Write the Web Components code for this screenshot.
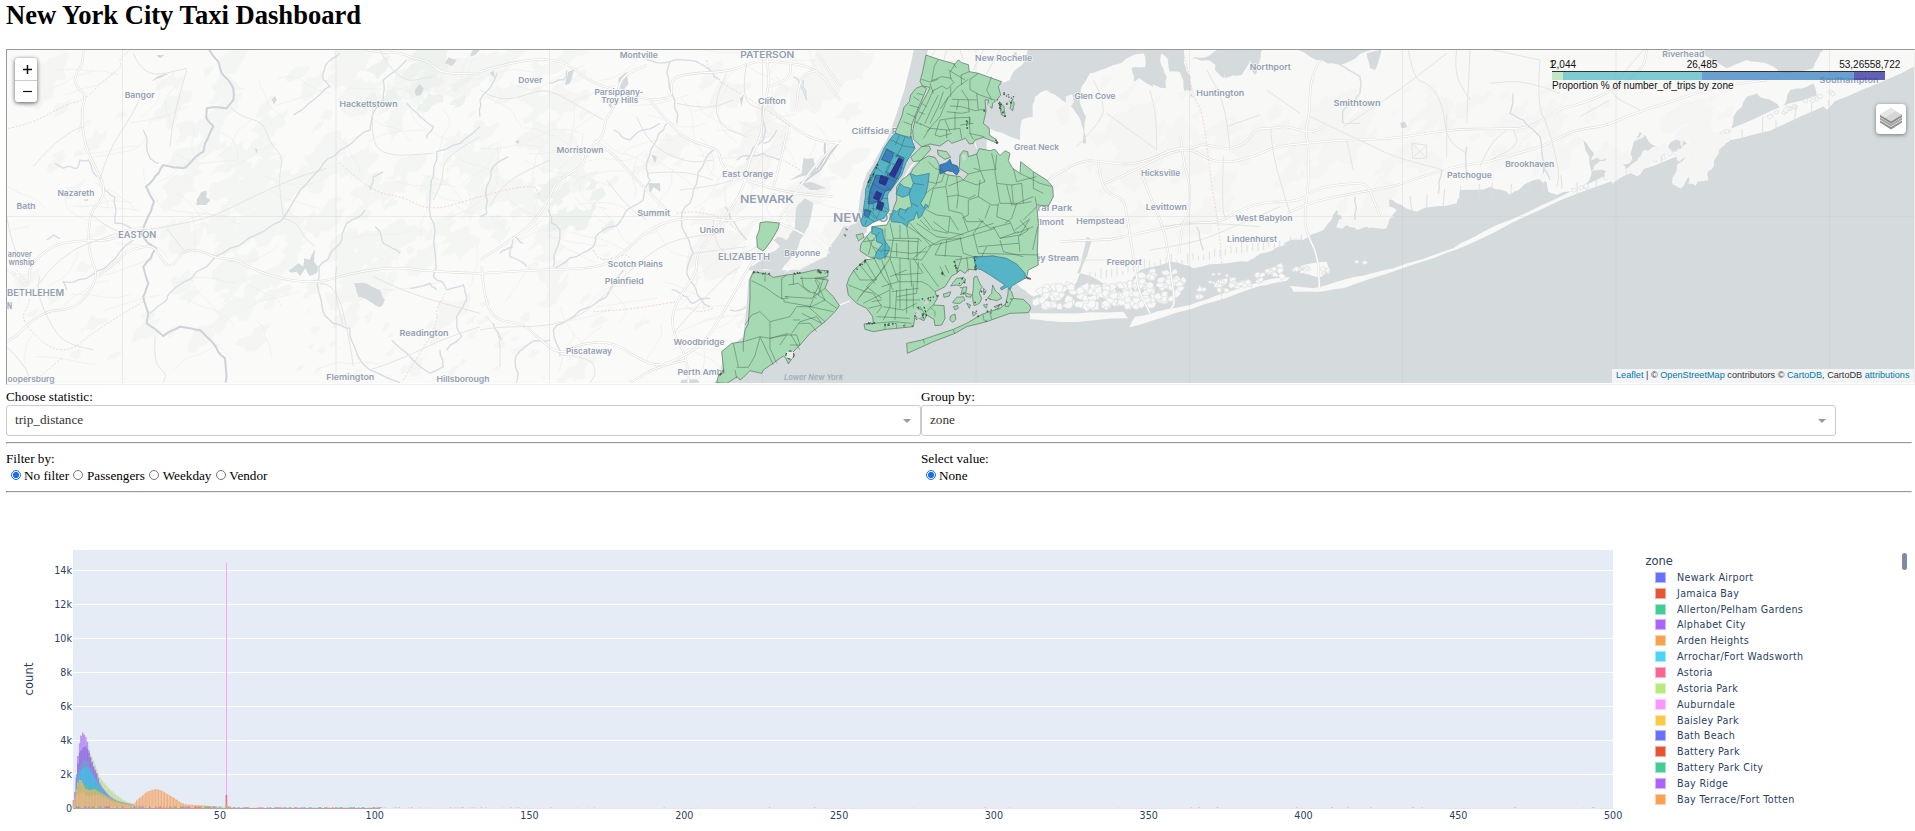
<!DOCTYPE html>
<html lang="en">
<head>
<meta charset="utf-8">
<title>New York City Taxi Dashboard</title>
<style>
body{margin:0;background:#fff;font:13.2px "Liberation Serif",serif;color:#000;overflow:hidden}
</style>
</head>
<body>
<taxi-dashboard>
  <span slot="title">New York City Taxi Dashboard</span>
  <taxi-map></taxi-map>
  <div slot="top">
    <labelled-select label="Choose statistic:">trip_distance</labelled-select>
    <labelled-select label="Group by:">zone</labelled-select>
  </div>
  <radio-set slot="filter" label="Filter by:" options="No filter|Passengers|Weekday|Vendor"></radio-set>
  <radio-set slot="value" label="Select value:" options="None"></radio-set>
  <trip-histogram slot="chart"></trip-histogram>
</taxi-dashboard>
<script>
const define = (name, html, after) => customElements.define(name, class extends HTMLElement {
  connectedCallback() {
    if (this.shadowRoot) return;
    const root = this.attachShadow({ mode: 'open' });
    const t = document.createElement('template');
    t.innerHTML = typeof html === 'function' ? html(this) : html;
    root.append(t.content.cloneNode(true));
    if (after) after(root, this);
  }
});
let seed = 7;
const rnd = () => (seed = (seed * 16807) % 2147483647) / 2147483647;
/* "x,y x,y ..." to a path, with midpoint displacement for natural shores */
function shape(str, amp = 0, closed = true) {
  let p = str.trim().split(/\s+/).map(s => s.split(',').map(Number));
  if (closed) p.push(p[0]);
  for (let k = 0; amp && k < 2; k++) {
    const q = [p[0]];
    for (let i = 1; i < p.length; i++) {
      const [a, b] = p[i - 1], [c, d] = p[i], l = Math.hypot(c - a, d - b), m = Math.min(l, 60);
      if (l > 9) q.push([(a + c) / 2 + (rnd() - .5) * amp * m, (b + d) / 2 + (rnd() - .5) * amp * m]);
      q.push(p[i]);
    }
    p = q;
  }
  return 'M' + p.map(v => v.map(n => n.toFixed(1)).join(' ')).join('L') + (closed ? 'Z' : '');
}
function smooth(str) {
  const p = str.trim().split(/\s+/).map(s => s.split(',').map(Number));
  let d = 'M' + p[0];
  for (let i = 1; i < p.length - 1; i++) d += `Q${p[i]} ${(p[i][0] + p[i + 1][0]) / 2},${(p[i][1] + p[i + 1][1]) / 2}`;
  return d + 'L' + p[p.length - 1];
}
const polys = (cls, list, amp) => list.map(s => `<path class="${cls}" d="${shape(s, amp)}"/>`).join('');
const lines = (cls, list, amp = 0) => list.map(s => `<path class="${cls}" d="${amp ? shape(s, amp, false) : smooth(s)}"/>`).join('');
const roads = list => lines('rc', list) + lines('ri', list);
const A = s => `<g transform="scale(.33333)">${s}</g>`;
const at = (x, y, s) => `<g transform="translate(${x} ${y}) scale(.33333)">${s}</g>`;

/* woodland and built-up patches */
function blots(n, x0, y0, w, h, cls, r) {
  let o = '';
  for (let i = 0; i < n; i++) {
    const cx = x0 + rnd() * w, cy = y0 + rnd() * h, rr = r * (.3 + rnd()), k = 11, pts = [];
    for (let j = 0; j < k; j++) { const a = j / k * 6.283, q = rr * (.35 + rnd()); pts.push((cx + Math.cos(a) * q * 1.4).toFixed(1) + ',' + (cy + Math.sin(a) * q - Math.cos(a) * q * .7).toFixed(1)); }
    o += `<path class="${cls}" d="${shape(pts.join(' '), .5)}"/>`;
  }
  return o;
}
function minor(n, x0, y0, w, h) {
  let o = '';
  for (let i = 0; i < n; i++) {
    let x = x0 + rnd() * w, y = y0 + rnd() * h, a = rnd() * 6.28, s = x.toFixed(1) + ',' + y.toFixed(1);
    for (let j = 0; j < 7; j++) { a += (rnd() - .5) * .9; x += Math.cos(a) * 9; y += Math.sin(a) * 6; s += ' ' + x.toFixed(1) + ',' + y.toFixed(1); }
    o += `<path class="mn" d="${smooth(s)}"/>`;
  }
  return o;
}
function specks(n, x0, y0, x1, y1, spread) {
  let o = '';
  for (let i = 0; i < n; i++) { const t = rnd(); o += `<circle cx="${(x0 + (x1 - x0) * t + (rnd() - .5) * spread).toFixed(1)}" cy="${(y0 + (y1 - y0) * t + (rnd() - .5) * spread).toFixed(1)}" r="${(1.3 + rnd() * 1.8).toFixed(1)}"/>`; }
  return o;
}

const places = [
  ['Bangor',139.7,98,30],['Hackettstown',368.5,107,58],['Nazareth',76,196.3,37],['Bath',26,209,19],['EASTON',137.3,238,38,8.4],
  ['anover',19.8,256.7,24],['wnship',21.5,265,26],['BETHLEHEM',35.5,296,57,8.4],['N',9.5,309,5,8.4],['oopersburg',31,381.5,47],
  ['Flemington',350.3,380,48],['Hillsborough',463,382,53],['Readington',424,335.5,49],['Montville',638.7,58.3,38],['Dover',530.3,82.5,24],
  ['Parsippany-',619,94.8,49],['Troy Hills',619.7,103,37],['PATERSON',767.3,57.8,54,8.6],['Clifton',772,104,28],['Morristown',580,152.5,47],
  ['East Orange',747.7,177,51],['NEWARK',767,202.7,54,11],['Summit',653.7,216,33],['Union',712,232.5,25],['ELIZABETH',744,259.5,52,8.4],
  ['Bayonne',802.3,255.8,36],['Scotch Plains',635.3,266.7,55],['Plainfield',624.3,284,39],['Woodbridge',699,344.7,51],['Piscataway',589,353.7,46],
  ['Perth Amboy',705,374.5,55],['New Rochelle',1003.6,61,57],['Cliffside Park',882,133.5,61],['Great Neck',1036.5,150,45],
  ['NEW YORK',870,222,74,12],['Floral Park',1048,210.5,49],['Elmont',1049,224.5,30],['Valley Stream',1049,260.5,60],
  ['Glen Cove',1095,99,41],['Northport',1270.3,70,41],['Huntington',1220.3,96,48],['Smithtown',1357,105.7,47],['Hicksville',1160.6,175.7,39],
  ['Levittown',1166.3,209.5,41],['Hempstead',1100.3,223.5,48],['West Babylon',1264,221,57],['Lindenhurst',1252,241.5,50],['Freeport',1124.3,265,35],
  ['Patchogue',1469.5,178,45],['Riverhead',1683.3,57.3,42],['Brookhaven',1529.7,167,49],['Southampton',1849,83,59]];
const labels = places.map(([t, x, y, w, s = 8]) => `<text x="${x - w / 2}" y="${y}" font-size="${s}" textLength="${w}" lengthAdjust="spacingAndGlyphs">${t}</text>`).join('')
  + `<text x="784" y="380" font-size="7.4" font-style="italic" textLength="59" lengthAdjust="spacingAndGlyphs" style="fill:#a2adb9;stroke:none">Lower New York</text>`;

function mapSvg() {
  const woods = blots(70, 170, 55, 310, 190, 'wd', 13) + blots(26, 230, 235, 220, 60, 'wd', 12) + blots(50, 450, 55, 130, 200, 'wd', 11) + blots(16, 130, 280, 150, 60, 'wd', 9)
    + blots(14, 8, 60, 120, 320, 'wd', 7) + blots(40, 300, 300, 250, 80, 'wd', 4) + blots(26, 580, 55, 240, 300, 'wd', 6) + blots(22, 200, 150, 90, 80, 'wd', 12)
    + blots(16, 360, 55, 110, 70, 'wd2', 9) + blots(10, 545, 180, 70, 60, 'wd2', 10);
  const nj = A(
    lines('rv2', ['628,150 655,185 665,220 700,265 700,300 680,325 620,325 618,350 640,380 615,430 610,455 570,490 550,505 490,495 475,520 438,560 462,605 440,660 425,700 445,730 468,745 430,800 445,850 430,890 445,940 440,970 490,1008 540,980 600,990 640,1030 675,1075 677,1148'], .12)
    + lines('rv', ['1220,180 1150,240 1150,300 1125,330 1110,390 1040,440 970,490 900,570 850,655 790,695 690,745 620,800 530,860 500,900 450,940','430,390 440,440 450,475 475,490','165,490 190,505 230,505 240,480 265,480 290,530','1440,380 1380,430 1310,455 1300,530 1290,600 1305,690 1300,830 1340,870 1390,855 1400,900 1370,950 1385,1010 1340,1050','1095,630 1040,670 1020,730 965,790 955,840 965,910 1000,970 1050,985 1070,1060 1110,1110 1200,1148','1220,310 1260,350 1300,380 1280,415','310,565 345,590 345,670 400,690','880,345 940,300 990,260 970,240 975,200 1020,160','200,870 190,845 260,835 330,790 400,720','1110,570 1120,530 1150,515','1125,680 1150,730 1200,760','1175,1020 1230,1070 1290,1120 1330,1100 1320,1050','1230,865 1290,850 1310,870','140,720 160,705 180,715'], .25)
    + polys('wt', ['590,600 605,575 620,572 618,590 632,600 620,615 590,615','865,812 895,790 910,800 912,775 928,780 945,748 942,785 955,800 950,820 930,828 915,805 900,828 890,815 875,818','1062,850 1090,848 1140,870 1155,900 1140,922 1110,905 1075,890','1245,270 1258,252 1272,265 1262,285 1248,288','1335,190 1345,172 1370,180 1355,198','815,300 826,288 830,300 822,314','455,243 475,228 508,220 480,235','765,445 773,450 770,460','240,598 265,596 262,604','470,165 495,165 480,175','1410,170 1420,150 1440,150 1425,165'], .15)
    + lines('bd', ['25,385 95,372 200,312 255,300 310,240 368,200 355,180 390,150','1010,480 1110,575 1210,590 1290,635 1440,590','430,905 300,980 185,1075 60,965 85,915 88,895','185,1075 120,1130','1335,880 1305,930 1315,960 1280,1030 1240,1090 1210,1140','50,810 85,855'])
    + roads(['250,150 250,190 225,225 225,255 260,290 245,320 250,420 280,490 315,560 305,600 268,640 265,760 295,825 260,890 210,930 150,930 90,965 60,1000 20,1025','20,810 50,820 60,850 90,860 85,800 150,740 220,722 340,722 370,690 430,685','295,825 350,790 375,755 430,740 465,740 490,790 520,800 550,750 600,750 650,775 710,778 740,800 850,840 960,848 1050,820 1180,800 1300,815 1440,820','1100,150 1160,160 1190,155 1240,175 1290,185 1320,220 1440,222'])
    + lines('mr', ['400,160 430,235 560,205','690,320 720,350 790,365 810,430 850,470 835,540 850,650','850,655 890,665 910,710 945,740','960,850 1010,850 1050,1030 1060,1100','1120,830 1220,880 1440,940','1110,1110 1200,1080 1320,1020 1440,980','1010,800 1000,860 1030,980','500,685 550,750','700,620 850,545 980,505','430,690 600,665 700,620','20,650 40,760 90,800','20,1040 80,1100 90,1148','110,860 180,760 350,700','465,1010 460,1090 500,1120 490,1148','1440,410 1330,470 1330,540 1300,600','560,210 520,350 510,440','120,830 105,870 160,990 200,1030 280,1050','268,640 320,680 370,700','100,500 150,440 220,390 250,380','300,540 320,460 400,340 430,270','1120,320 1110,420 1160,470 1300,460','1140,150 1190,250 1300,230'])
  );
  const B = at(480, 40,
    lines('rv', ['85,350 40,380 20,440 20,520 0,530','205,510 240,570 225,640 220,680','700,330 660,390 640,450 615,500 610,570 640,640 620,700 650,760 690,800','560,250 530,300 500,370 510,420 490,480 430,530 370,570 340,620 290,650 225,685','400,270 450,300 490,270 540,250','570,65 575,160 590,250','860,180 850,300 800,360','890,270 850,310','750,810 800,800','575,750 620,770 640,790 690,775','430,690 380,770 280,830 220,870 240,950','500,60 570,65 650,65 690,90 720,120','130,610 100,590 90,650 140,680','210,900 150,910 105,960 110,1028','0,230 0,180 50,100','210,130 250,120 260,90','940,110 980,180 970,120','770,360 850,340 900,360','735,500 770,560 800,600','65,900 40,850','60,640 100,620'], .3)
    + polys('wt', ['415,115 440,95 445,130 430,155 415,140','515,345 530,350 525,370','505,430 540,430 540,455 520,440 510,460','265,95 285,85 270,130 255,135','385,195 395,185 395,205','605,1020 650,1018 660,1028 600,1028','30,100 40,92 45,115','780,175 790,165 785,200','105,305 118,300 116,312'], .1)
    + polys('wt', ['970,355 1000,355 1010,400 960,410 930,420 965,400','965,430 990,425 1040,445 990,450','950,500 975,475 1000,490 985,560 950,630 905,690 800,690 830,670 870,640 900,620 880,600 895,590 920,600 945,560'], .12)
    + lines('rv2', ['1080,300 1020,390 960,430','1010,390 1035,350 1035,310'], .1)
    + lines('bd', ['0,470 160,425 180,470','340,815 440,810 590,785','620,800 650,820 700,805','720,125 780,160 860,210 930,260','340,630 355,670 440,640 450,655','590,520 650,510 740,540 790,590','970,395 910,360','680,60 690,100'])
    + roads(['0,95 120,58 250,58 320,120 400,150 500,180 580,175 570,120 620,100 750,95 830,60 935,70 1010,85 1080,180','0,660 80,610 170,540 210,470 230,420 310,380 320,330 370,290 375,240 410,190 420,110 500,75','0,700 200,688 350,685 420,650 500,570 590,535 700,535 760,545 800,530 900,545 1000,600 1040,590','510,180 590,280 650,310 720,330 720,370 760,410 860,440 940,460 1060,470','340,300 400,340 450,400 500,450 560,510','5,680 10,760 40,840 130,850 180,900 240,945 300,910 400,905 480,960 540,980 620,945 680,900 740,800 800,690 860,600 900,530 960,440 1000,380 1080,300','860,40 870,130 850,200 845,290 810,350 790,450 730,540 700,580 650,640 650,700 610,750 575,820 580,880 620,950 625,1028','930,70 940,110 870,140','1080,140 1040,80 1010,40','850,190 920,250 1000,300 1080,310','920,280 900,370 880,440','620,960 540,975 450,1028','950,200 955,110 1010,90'])
    + lines('mr', ['0,150 60,190 180,150 220,155 300,200 370,240','30,500 60,430 210,360','470,230 500,310 620,370 700,360','740,100 700,180 720,260 800,290','590,190 680,210 760,180','0,870 50,860 200,860 300,830 380,760 440,700 560,600 720,580','240,945 330,950 350,1000 330,1028','380,420 440,500 500,540','580,880 720,720 780,680','640,640 800,620','600,450 690,440 760,420','700,540 700,610 760,660 830,620','500,400 600,390 700,420','800,70 780,180 850,210','20,830 60,870 60,980'])
  );
  const east = at(700, 40,
    `<path class="wt" d="${shape('643,20 1090,20 1090,1200 20,1200 40,1030 60,1010 75,930 130,890 145,720 160,690 230,690 300,690 380,650 388,620 430,560 470,550 482,460 500,400 560,300 600,190', .07)}"/>`
    + polys('ld', ['340,560 385,600 380,645 300,680 255,698 290,640 300,600'], .1)
    + `<path class="pier" d="M340 600l50 40M355 590l40 30M375 575l25 15M400 570l20 10M455 545l-15 20"/>`
    + polys('ld', ['686,20 985,20 970,70 940,95 930,120 900,130 810,100 680,60'], .15)
    + polys('ld', ['500,560 520,545 570,545 570,700 500,680'])
    + lines('mr', ['705,30 690,60','740,30 730,65','780,30 790,60','850,30 820,90','900,28 860,100','700,75 780,60'])
    + polys('wt', ['940,40 950,35 948,60','990,800 1080,800 1080,815 990,825'], .1)
    + lines('ri', ['420,795 450,783','490,590 515,565 520,550 570,540','590,470 600,440 625,390 650,360 680,335','640,310 645,275','470,600 500,580','822,300 830,325','890,300 893,345'])
  ) + at(1060, 40,
    `<rect class="wt" x="0" y="20" width="2600" height="1020"/>`
    + polys('ld', ['-220,600 -220,260 -120,300 -115,240 -82,232 -75,170 -40,150 0,175 30,195 65,255 68,310 78,310 78,230 60,190 62,150 90,100 160,75 210,50 250,40 255,85 215,85 222,125 260,98 262,130 318,145 320,110 300,60 305,40 325,60 330,95 360,97 372,150 400,175 392,110 372,70 368,20 480,20 440,50 395,55 450,62 490,90 494,115 545,105 572,60 585,105 600,60 610,20 690,20 770,60 840,75 900,40 960,20 1910,20 1950,55 2000,85 2060,60 2130,75 2155,95 2260,85 2280,40 2300,20 2600,20 2600,60 2440,130 2340,170 2300,210 2270,170 2260,130 2190,150 2180,180 2160,205 2110,175 2090,160 2060,170 2020,230 2000,290 1960,280 1900,325 1860,290 1815,330 1770,310 1740,275 1710,345 1620,360 1570,300 1595,400 1570,440 1490,465 1465,455 1455,420 1410,425 1350,465 1290,440 1200,450 1190,490 1070,515 1010,490 970,470 970,495 1010,510 980,565 930,560 880,545 850,545 830,510 790,570 730,600 690,600 640,630 560,665 500,670 400,685 330,665 240,690 210,740 150,745 60,700 40,740 0,740 -80,770 -130,730 -140,690 -60,640'], .2)
    + polys('ld', ['-90,820 0,820 190,815 205,835 0,846 -90,838','208,862 225,830 310,810 390,795 490,760 620,720 690,712 680,722 600,738 480,780 310,832','690,738 760,745 880,712 1000,685 1180,625 1270,575 1440,498 1620,415 1780,355 1980,280 2190,190 2340,150 2500,85 2600,40 2600,62 2500,110 2320,185 2130,272 1960,312 1720,396 1440,510 1260,598 1120,655 850,745 780,755 700,755','730,675 800,665 810,690 780,712 730,700'], .08)
    + polys('wt', ['218,82 262,80 280,140 235,112','470,62 497,90 490,115 465,90','920,40 965,28 945,90 930,85','690,20 960,20 900,42 840,66 770,50','1020,250 1035,245 1042,262 1025,265','80,590 95,600 60,700 52,700'], .1)
    + (() => { let o = ''; const pt = (x, y, s) => { const q = []; for (let j = 0; j < 7; j++) q.push((x + Math.cos(j * .9) * s * (.5 + rnd())).toFixed(1) + ',' + (y + Math.sin(j * .9) * s * (.5 + rnd() * .8)).toFixed(1)); o += `<path class="ld is" d="${shape(q.join(' '), .2)}"/>`; };
      for (let i = 0; i < 100; i++) pt(-75 + rnd() * 360, 735 + rnd() * 66, 13);
      for (let i = 0; i < 50; i++) pt(225 + rnd() * 150, 692 + rnd() * 92, 11);
      for (let i = 0; i < 42; i++) { const t = rnd(); pt(410 + t * 260, 762 - t * 70 + (rnd() - .5) * 34, 9); }
      for (let i = 0; i < 12; i++) pt(700 + rnd() * 110, 680 + rnd() * 20, 7);
      for (let i = 0; i < 7; i++) pt(450 + rnd() * 120, 700 + rnd() * 30, 5);
      pt(890, 665, 5); pt(915, 668, 8);
      for (let i = 0; i < 34; i++) { const t = rnd(); pt(1440 + t * 900, 497 - t * 345 - rnd() * 9, 7); } return o; })()
    + (() => { let o = ''; for (let i = 0; i < 40; i++) { const t = i / 40, x = 90 + t * 650, y = 722 - t * 110 - rnd() * 12; o += `<path class="crk" d="M${x.toFixed(0)} ${y.toFixed(0)}v-${(10 + rnd() * 22).toFixed(0)}"/>`; } for (let i = 0; i < 26; i++) { const x = 1040 + i * 50 + rnd() * 20, y = i < 10 ? 510 - i * 7 : 470 - (i - 10) * 17; o += `<path class="crk" d="M${x.toFixed(0)} ${y.toFixed(0)}l${(rnd() * 10 - 5).toFixed(0)} -${(26 + rnd() * 30).toFixed(0)}"/>`; } return o; })()
    + blots(70, 0, 190, 2000, 210, 'bu', 40) + blots(30, 0, 250, 1000, 290, 'bu', 46) + blots(40, 100, 120, 1900, 200, 'wd', 15)
    + roads(['-190,520 -60,440 0,395 70,360 130,365 200,375 270,360 340,325 400,325 430,310 500,330 560,310 585,265 640,265 680,258 730,275 770,275 800,250','135,430 230,390 300,350 360,330 400,330 450,362 510,368 580,350 650,318 740,310 850,300 980,298 1100,280 1200,267 1290,267 1400,265 1450,240 1500,205 1570,190 1640,160 1750,90 1760,30','0,605 80,600 150,600 210,585 310,565 390,548 480,547 520,520 600,487 700,485 740,470 780,440 900,428 925,440 945,490 960,530','680,520 740,490 860,463 1000,440 1070,415 1180,380 1290,365 1390,335 1460,315 1540,270 1640,258 1720,220 1850,180 1960,140 2120,120','115,370 120,410 140,460 190,475 200,520 210,590 225,680 235,750 270,820','240,390 270,470 310,560 325,640 335,720 345,790 330,810','362,290 370,370 390,430 390,510 365,560 358,640','780,60 750,110 750,220 735,270 745,310 745,450 735,500 735,570 775,650 778,745'])
    + lines('mr', ['50,320 130,240 130,180 100,120','140,220 250,300 290,330','290,330 290,230 270,150','510,330 500,200 440,90','632,265 635,340 690,520','1045,28 1060,120 1110,130 1150,200 1160,300 1220,340','850,260 980,180 1160,40','750,230 920,310 1000,350 1150,390','850,250 900,250','490,350 485,510 500,540','860,300 880,390','1190,28 1180,100 1230,180','1230,28 1220,250','1160,220 1160,350','1440,60 1430,190 1465,260 1500,400 1490,440','1290,360 1380,320 1360,270','1750,30 1690,100 1640,160 1740,210','1260,380 1290,310 1340,270','270,630 400,610 500,570 660,500','0,660 200,660','300,560 400,545 600,560','1500,160 1400,120 1290,130','1650,180 1560,230','620,150 720,220','500,260 600,225','1440,60 1300,30'])
    + lines('rv', ['840,75 900,110 900,160 880,185 850,210 850,250','885,470 885,540','1145,390 1135,460','1220,320 1220,420','1360,160 1350,220 1390,240 1440,290 1450,400','410,560 430,630','1450,380 1470,420'], .15)
    + lines('bd', ['365,28 380,70 400,170 425,210 440,310 455,440 470,520 485,640 485,780'])
    + `<path class="mr" d="M1055 310l45 5 0 40-42 0zM1058 312l40 40M1100 316l-40 35M1470 202l0 0"/>`
  );
  const zones = at(700, 40,
    polys('g', ['678,45 715,58 765,72 775,60 785,68 805,74 808,95 835,100 905,125 895,140 902,165 890,180 878,190 876,205 862,195 866,180 855,180 858,215 850,250 868,265 868,285 888,298 892,310 850,292 825,300 820,310 808,312 797,295 755,310 745,300 720,318 690,312 665,320 640,298 638,272 648,228 665,190 682,160 690,142 668,138 660,125 668,95','648,145 665,138 680,145 672,165 650,215 635,255 632,292 600,285 585,278 605,230 612,202 628,185 632,165','665,320 688,318 692,328 662,362 640,365 632,352 650,335','712,330 740,335 752,352 735,358 715,345','180,548 200,545 238,549 235,565 215,600 195,628 188,632 172,622 170,590 178,570',
      '160,695 185,700 205,703 220,712 260,705 300,700 345,690 385,692 383,710 345,715 385,720 375,745 400,770 418,797 405,815 375,845 330,880 300,915 275,940 280,950 265,972 258,955 250,948 190,990 185,1000 150,992 130,1012 120,1020 112,1010 80,1030 50,1028 56,1005 72,998 65,935 95,910 130,905 135,870 145,850 150,780 150,720',
      '622,940 620,910 665,900 700,888 760,868 800,850 848,822 900,805 925,785 935,775 970,778 990,797 992,806 985,818 930,820 860,845 800,860 765,880 700,905',
      '632,400 640,385 655,370 660,362 685,348 705,352 717,372 718,395 745,405 780,410 790,420 805,402 778,385 780,345 790,332 803,335 805,350 830,342 838,326 870,332 885,328 900,347 915,332 930,340 925,362 938,385 960,400 962,365 1000,395 1040,420 1058,440 1060,470 1045,498 1010,495 1015,550 1012,640 1015,675 985,690 980,712 965,690 930,665 880,648 822,650 830,690 805,688 795,700 780,690 770,700 755,708 735,740 705,755 712,775 700,795 732,797 735,835 725,855 705,857 702,838 680,825 672,842 645,830 640,860 560,868 520,875 495,868 492,852 520,850 518,830 500,805 470,790 445,765 440,735 448,712 462,690 495,660 525,655 505,650 480,632 483,612 500,590 515,572 515,560 560,555 568,540 575,520 590,480 590,440 605,420'])
    + polys('g', ['468,585 488,580 492,592 475,603','432,583 438,585 436,590','437,566 443,568 440,571','770,715 790,712 798,720 780,738 768,735 752,738','822,712 830,708 842,735 847,740 838,760 845,775 838,790 822,797 818,770 820,745','752,828 765,822 768,838 757,847 750,840','788,742 800,740 798,755 782,765','770,772 790,770 795,780 780,790 758,788','862,775 875,760 878,735 885,750 900,765 905,775 890,782','795,758 815,765 812,772 798,770','925,745 935,755 940,775 925,800 915,798 922,770','760,800 772,796 775,805 765,810','850,795 862,792 858,805','882,800 898,795 895,808','800,790 812,795 808,805','730,762 752,755 748,768 732,772','935,180 943,190 938,212 930,205','898,185 912,200 915,230 905,225','850,745 858,752 852,765','817,815 830,820 820,828'], .1)
    + polys('c', ['585,280 610,288 630,295 633,288 636,300 645,325 635,340 618,368 605,405 580,440 565,460 562,470 567,512 552,535 535,540 518,548 500,560 488,558 482,545 488,530 490,510 496,470 497,448 512,405 535,365 552,325 570,298','630,400 650,408 688,400 683,440 676,465 662,490 672,505 676,492 685,498 672,512 665,528 655,535 650,515 642,538 625,545 622,560 605,548 575,545 572,535 582,510 590,515 600,505 615,510 635,500 630,475 628,460 640,430','600,430 612,440 632,445 626,465 608,472 588,462','518,560 548,568 550,590 553,600 570,625 558,650 540,658 524,652 530,635 548,612 530,605 528,585 515,580','822,650 860,650 880,648 920,655 950,672 975,700 975,715 935,738 930,750 922,740 905,750 900,745 915,735 870,705 845,690 828,685'])
    + polys('m', ['560,328 580,338 575,365 568,368 545,358','590,345 612,355 600,400 575,445 555,455 545,480 520,490 505,492 510,450 520,425 528,405 560,410','495,508 513,513 505,532 492,526','720,375 740,368 750,358 755,372 772,378 778,392 770,405 758,395 742,392 720,402'])
    + polys('c', ['582,345 597,352 572,400 555,398'])
    + polys('d', ['597,354 608,360 583,413 568,405','543,406 565,415 556,436 537,428','530,454 545,461 536,482 520,474','535,482 552,490 545,512 529,505'])
    + `<path class="z" d="M715 58l-12 20-8 45M765 72l-15 25 2 20 10 10-20 20M808 95l-25 10 2 30M835 100l-25 18 0 30 25 15 50 18M695 122l30-12 30 5M665 118l25 8 25-8M805 118l-35 25-30 35-20 30M742 148l-15-10-30 15M755 178l75 2M750 198l35 2 40 12 33-5M740 215l45 5 25-5M720 240l40-6 50-2 0 20M700 150l-20 45-30 55M715 165l-20 40-20 45M730 155l-15 45-25 50M745 170l-25 60-40 45M665 190l15 10M656 215l18 8M645 245l20 10M660 250l30 15 50 5 40-5M690 265l-20 30M720 240l-15 45 15 5 35-10M740 270l0 25M780 265l5 30M808 230l2 50 10 18M760 72l10 12M808 280l45 10M820 250l-40 5M752 140l0 30M775 180l-5 30M805 180l2 35M640 170l18 12M628 195l28 8M620 220l28 12M610 245l25 10M650 160l20 5M875 110l-15 40 15 30M690 130l10 30M785 150l20 30M830 160l5 50M745 90l50 30M735 240l15 35M765 215l0 55"/>`
    + `<path class="z" d="M570 298l40 20 35 5M598 285l-12 30M615 290l-10 30M555 325l30 15 30 15M605 320l-18 35M543 358l30 12-25 50-40-15M525 380l25 20M575 370l20 10 15 5M535 365l-30 80M560 395l25 20 10 0M528 405l-25 75M515 430l35 20 25 0M505 455l40 20 20 0M500 485l30 0 35 25M510 470l-5 45 20 20M490 510l25 5 20 25M515 505l45 10M550 490l-20 45M488 530l20 5 15 10M500 540l-5 15M562 410l20 15M560 440l10 12M520 490l0 25"/>`
    + `<path class="z" d="M685 365l20 20 30 10-10 30-20 5-20-5M718 395l-10 40-30 25M745 405l-8 35 5 30 5 40M790 420l-45 18M735 440l-35 5-15 60M742 470l30-5 35 10 20-10M770 410l5 55-5 40M790 420l40 15 25-10-15-35-20-5M805 402l40-10 45-5M830 342l10 45M885 385l-10-45M890 345l-5 50 5 35 45 5 30-5M840 420l-5 50 40 25 20 0M890 430l10 60M935 435l5 55M940 385l10 40 60-15M965 430l5 60M1000 395l0 50 30 15M960 400l60 30 35 10M950 490l50-20M1005 470l5 25M835 470l-30 10 0 45-20 10M870 495l-15 40M895 490l-5 40 40 15M920 435l15 60 60-10M900 490l50 0-15 45-20 15M745 510l40 10 15 25 50 0M680 510l30 15 40 5 25 40M670 530l30 40 45 10M660 540l30 30M650 550l60 40 40 5 70-25 60-20M625 560l80 55 80-20 100-30M625 545l65 70M685 620l40-20 60-5M700 545l40 30 50 10M750 530l-5 45M790 535l15 40M835 535l35 30 60-15M850 540l-30 40M880 560l20 35 55-20M930 545l15 35M900 595l60-10 30-50M960 540l25 30-30 20 5 45M985 540l-40 30M1010 500l-40 40M950 580l50-20M1013 560l-15 70M900 600l10 35 60 15M820 580l15 60M835 620l120-10M835 640l180 5M860 620l-15 30M780 590l10 50 45 15M740 600l-5 50M725 605l-20 40 80 5M830 650l-65 10M785 650l-15 50M800 650l5 45"/>`
    + `<path class="z" d="M555 565l0 95M570 550l10 45 75 0 10 10M600 555l0 40M620 560l5 35M580 595l-10 60M625 600l0 60M655 595l-5 65M560 600l95 5M545 630l85 10 50-5M555 650l110 10 30-45M590 610l0 40M525 600l-35 5M540 575l-25 30-10 40M500 590l30 50M520 620l25 15M495 660l35 60M480 675l45 55M460 690l20 30 50 0M520 650l30 60 30 40M545 660l30 80M500 740l40-40 30-45M480 770l45-50 30-45M445 735l50 20 25 5M470 785l20-30 15-15M500 740l45 35M490 790l40-20 40-20M520 760l25 40-15 20M545 740l50-15 70 0M570 655l25 70M600 655l0 150M630 660l5 80M655 665l-5 95M665 700l-80 5M665 670l50 70M620 690l-50 20M590 780l70 0M570 740l0 60-20 40M590 750l-5 90M620 745l0 75M640 730l0 75M550 800l60 10 40-20M530 830l100 5M520 850l60-5 55 5M555 850l0 18M590 850l0 15M615 850l0 12M650 760l-60 10M655 745l-80 10M665 725l20 10 20 20M690 800l15 15 0 15M700 795l-25 25M650 800l20 30M660 800l20 30M650 815l15 20M720 680l15 30M735 675l12 25M765 665l5 30M545 780l-30 5M505 805l40-10M680 620l-40 35 30 45"/>`
    + `<path class="z" d="M155 722l40 20 35 25 25 15M195 703l0 22M260 705l-15 10 0 40 0 20 20 0M280 705l0 30M265 735l30-5 30 25 20 5M305 710l5 30 20 15M300 715l80 0M345 715l15 15-20 40 10 5M370 715l-15 50M375 745l-40 30-80-5 10 0M340 755l70 50M345 720l30 60M375 780l-40 20-85-15M340 775l-10 25 70 15M330 800l-40 0-20 30-60 15-30-30-25 10-20 30M210 845l0 50 50-10-20 30M130 905l50-15 30 5 55-15M180 892l-15 55-20 35-35 0M100 910l15 70M180 890l40 85M210 895l0 30 20 45M270 880l30 50M260 885l30 0 10 30-30 0M295 850l35 0 20 25M275 880l25-35 50-15 15 20M305 820l60 30M375 845l-50-45M105 990l5 25M300 840l-20 0M130 905l0 30"/>`
    + `<path class="z" d="M640 430l32 5M655 500l-20-10M600 505l-5 20 20 15M625 500l-10 20M760 870l5 12M670 898l3 12M848 822l5 22M870 816l5 22"/>`
    + `<g class="sp">${specks(9,160,695,215,705,6)}${specks(8,280,702,300,698,5)}${specks(9,345,692,386,700,8)}${specks(12,893,175,912,230,10)}${specks(9,650,800,668,835,16)}${specks(14,665,785,710,770,16)}${specks(8,822,655,828,690,6)}${specks(7,765,660,772,695,6)}${specks(16,500,850,640,856,6)}${specks(10,465,690,510,650,6)}${specks(10,500,440,545,355,5)}${specks(4,855,210,850,216,4)}${specks(5,888,300,892,310,4)}${specks(8,975,712,990,717,6)}${specks(12,860,820,930,780,10)}${specks(5,720,690,728,705,5)}${specks(5,60,1005,70,990,4)}${specks(14,905,150,940,190,30)}${specks(6,800,240,808,300,4)}${specks(14,790,720,860,820,60)}</g>`
    + `<circle cx="270" cy="945" r="12" fill="#e8ecea" stroke="#222" stroke-width="3" stroke-dasharray="9 8"/><path d="M650 815q-12 20 3 24M672 800l8 28" fill="none" stroke="#333" stroke-width="3" stroke-dasharray="6 5"/>`
    + `<path style="fill:#d5dadd" d="M645 815q10-15 18 2q4 20-10 18zM668 782l18-4 0 10-14 8zM785 345l12-3 0 18-8 2zM862 190l8 2 0 14-8-2z" opacity=".8"/>`
  );
  return `<svg viewBox="7 50 1907 333" width="1907" height="333">
  <clipPath id="frame"><rect x="7" y="50" width="1907" height="333"/></clipPath>
  <g clip-path="url(#frame)"><rect x="0" y="40" width="1915" height="350" fill="#fafaf8"/>
  ${blots(40, 10, 60, 850, 320, 'bu', 14)}${blots(30, 700, 50, 160, 260, 'bu', 18)}${woods}${minor(90, 10, 55, 560, 320)}${minor(90, 570, 55, 260, 310)}
  ${nj}${B}${east}
  <path d="M122.5 50V383M336 50V383M549.5 50V383M762.5 50V383M976 50V383M1189.5 50V383M1402.5 50V383M1616 50V383M1829.5 50V383M7 216.5H1914" stroke="#c9c6c4" stroke-opacity=".28" fill="none"/></g>
  <g class="lb">${labels}</g><g clip-path="url(#frame)">${zones}</g></svg>`;
}

define('zoom-control', `<style>
:host{display:block;width:22px;border-radius:3px;background:#fff;box-shadow:0 1px 4px rgba(0,0,0,.65)}
button{display:flex;align-items:center;justify-content:center;width:22px;height:21.5px;border:0;padding:0 0 0 1px;background:none}
button+button{border-top:1px solid #ccc;height:22px}
</style><button aria-label="Zoom in"><svg width="10" height="10"><path d="M1 5.500H10M5.500 1V10" stroke="#111" stroke-width="1.5"/></svg></button><button aria-label="Zoom out"><svg width="10" height="10"><path d="M1 5.500H10" stroke="#111" stroke-width="1.2"/></svg></button>`);

define('layers-control', `<style>
:host{display:grid;place-items:center;width:30px;height:30px;background:#fff;border-radius:4px;box-shadow:0 1px 4px rgba(0,0,0,.45)}
svg{display:block}</style>
<svg width="24" height="24" viewBox="0 0 24 24"><path d="M1 13.5L12 20l11-6.500v2L12 22.500 1 15.500z" fill="#8f8f8f"/><path d="M1 10.500L12 17l11-6.500v2.200L12 19.500 1 12.700z" fill="#a5a5a5"/><path d="M1 7.500L12 14l11-6.500v2.500L12 16.700 1 10z" fill="#8c8c8c"/><path d="M12 1l11 6.700-11 6.800L1 7.700z" fill="#d6d6d6"/><path d="M12 1l5 3-11 6.700-5-3z" fill="#e6e6e6"/></svg>`);

define('color-scale', `<style>:host{display:block;width:365px;height:36px}svg{display:block;overflow:visible}text{font:10px "Liberation Sans",Arial,sans-serif;fill:#111}</style>
<svg width="365" height="36"><g opacity=".75"><rect x="2" y="12" width="11" height="8" fill="#b4e3b4"/><rect x="13" y="12" width="139" height="8" fill="#56bcc8"/><rect x="152" y="12" width="152" height="8" fill="#3a83c2"/><rect x="304" y="12" width="31" height="8" fill="#302ea0"/></g>
<path d="M2 11.500H335" stroke="#333"/>
<text x="2" y="8" text-anchor="middle">1</text><text x="13.500" y="8" text-anchor="middle" textLength="25">2,044</text><text x="152" y="8" text-anchor="middle">26,485</text><text x="304.500" y="8" text-anchor="middle">53,265</text><text x="335" y="8" text-anchor="middle">58,722</text>
<text x="2" y="29" textLength="181.500">Proportion % of number_of_trips by zone</text></svg>`);

define('taxi-map', () => `<style>
:host{display:block;position:relative;box-sizing:border-box;height:336px;width:1909px;border:1px solid;border-color:#999 #eee #eee #999}
svg{display:block;overflow:visible}
zoom-control{position:absolute;left:8px;top:8px}
color-scale{position:absolute;left:1543px;top:10px}
layers-control{position:absolute;left:1869px;top:54px}
.credit{position:absolute;right:0;bottom:1px;height:14px;width:302px;box-sizing:border-box;background:rgba(255,255,255,.7)}
.credit text{font:9px "Liberation Sans",Arial,sans-serif;fill:#333}
.credit .a{fill:#0078a8}
path{fill:none}
.wd{fill:#f3f6f3}.wd2{fill:#edf2ef}.bu{fill:#f5f5f3}
.ld{fill:#f8f8f6}.wt{fill:#d5dadd}.pier{stroke:#f4f4f3;stroke-width:4}
.is{stroke:#dde1e3;stroke-width:2.500}
.crk{stroke:#d9dee1;stroke-width:2.600}
.rv{stroke:#d6dde3;stroke-width:4}.rv2{stroke:#cdd3d8;stroke-width:6}
.rc{stroke:#e0dfde;stroke-width:7}.ri{stroke:#fff;stroke-width:3.600}
.mr{stroke:#e5e4e4;stroke-width:3}.mn{stroke:#efefee;stroke-width:.8}
.bd{stroke:#eed4d6;stroke-width:3;stroke-dasharray:6 5}
.lb{font-family:Inter,"Open Sans",sans-serif;font-weight:600;fill:#929fb2;stroke:rgba(250,250,248,.75);stroke-width:1.400;paint-order:stroke}
.g,.c,.m,.d{stroke:#5f7c6a;stroke-width:2.300}
.g{fill:#a6dab3}.c{fill:#56b4c7;stroke:#3d8195}.m{fill:#3d7fbc;stroke:#2b5d8c}.d{fill:#2a3394;stroke:#232b78}
.z{stroke:#3f5f4c;stroke-opacity:.52;stroke-width:2.600}
.sp{fill:#202c25;opacity:.7}
</style>${mapSvg()}<zoom-control></zoom-control><color-scale></color-scale><layers-control></layers-control>
<div class="credit"><svg width="302" height="14"><text x="4" y="9" textLength="293.500" lengthAdjust="spacingAndGlyphs"><tspan class="a">Leaflet</tspan> | © <tspan class="a">OpenStreetMap</tspan> contributors © <tspan class="a">CartoDB</tspan>, CartoDB <tspan class="a">attributions</tspan></text></svg></div>`);

define('labelled-select', el => `<style>
:host{display:block;width:915px}
label{display:block;height:15px;line-height:13px}
.box{display:flex;align-items:center;justify-content:space-between;box-sizing:border-box;height:31px;border:1px solid #ccc;border-radius:3px;padding:0 9px 0 8px;color:#333;line-height:27px}
.box span{margin-top:-2px}
i{border:4.500px solid transparent;border-top-color:#999;border-bottom:0}
</style><label>${el.getAttribute('label')}</label><div class="box"><span><slot></slot></span><i></i></div>`);

define('radio-set', el => `<style>
:host{display:block;width:915px}
.t{height:15px;line-height:13px}
.r{display:flex;align-items:center;height:17px;padding-left:4.500px}
label{display:flex;align-items:center;margin-right:4.400px;height:16px}
input{appearance:none;box-sizing:border-box;width:10px;height:10px;margin:-2px 3.500px 0 0;border:1px solid #767676;border-radius:50%;background:#fff}
input:checked{border-color:#1a6ff0;background:radial-gradient(#1a6ff0 0 2.800px,#fff 3.300px)}
</style><div class="t">${el.getAttribute('label')}</div><div class="r">${el.getAttribute('options').split('|').map((o, i) => `<label><input type="radio" name="r" ${i ? '' : 'checked'}>${o}</label>`).join('')}</div>`);

const zoneNames = ['Newark Airport','Jamaica Bay','Allerton/Pelham Gardens','Alphabet City','Arden Heights','Arrochar/Fort Wadsworth','Astoria','Astoria Park','Auburndale','Baisley Park','Bath Beach','Battery Park','Battery Park City','Bay Ridge','Bay Terrace/Fort Totten'];
const cols = ['#636efa','#ef553b','#00cc96','#ab63fa','#ffa15a','#19d3f3','#ff6692','#b6e880','#ff97ff','#fecb52'];
const leg = ['#6870fd','#e75337','#43cd96','#aa63ff','#faa154','#4cd3f5','#f96692','#bae87b','#fa97ff','#fac948'];

define('zone-legend', `<style>
:host{display:block;padding-top:4px;width:263px;position:relative;font-family:"DejaVu Sans",Verdana,sans-serif;color:#2a3f5f}
h2{margin:0 0 0 .5px;font-size:11.500px;font-weight:400;height:15.500px;line-height:15px}
ul{margin:0;padding:0 0 0 10px;list-style:none}
li{display:flex;align-items:center;gap:11px;height:15.850px;font-size:9.600px;letter-spacing:.3px;white-space:nowrap}
b{width:11px;height:11px;box-sizing:border-box;border:1px solid rgba(255,255,255,.5)}
.bar{position:absolute;right:1px;top:3px;width:5px;height:17px;border-radius:2.500px;background:#808ba4}
</style><h2>zone</h2><ul>${zoneNames.map((n, i) => `<li><b style="background:${leg[i % 10]}"></b><span>${n}</span></li>`).join('')}</ul><div class="bar"></div>`);

function bars() {
  const at = (pr, X) => { for (let i = 1; i < pr.length; i++) if (X <= pr[i][0]) { const [a, b] = pr[i - 1], [c, d] = pr[i]; return X < a ? 0 : b + (d - b) * (X - a) / (c - a); } return 0; };
  const layers = [
    ['#c0e19d', .85, [[250,120],[262,182],[280,143],[300,90],[320,66],[345,42],[370,24],[395,12]]],
    ['#b488f5', .85, [[218,14],[225,50],[231,122],[236,180],[241,207],[246,229],[251,221],[256,217],[262,198],[267,170],[272,148],[280,126],[290,105],[300,72],[312,55],[330,35],[350,22],[380,14],[440,8]]],
    ['#9376e2', .85, [[225,40],[231,110],[238,165],[248,180],[258,186],[268,162],[280,124],[290,100],[300,66],[312,50],[330,30],[360,14]]],
    ['#779ecd', .8, [[225,40],[232,100],[240,125],[252,145],[262,140],[275,112],[290,84],[310,48],[340,20]]],
    ['#4eb7e6', .95, [[225,30],[228,72],[240,108],[250,122],[265,121],[275,104],[290,80],[305,56],[325,32],[360,14],[420,7]]],
    ['#4cc1b6', .5, [[228,45],[245,76],[262,70],[290,66],[310,46],[340,24],[390,10]]],
    ['#ddb66d', .9, [[218,14],[225,30],[232,73],[241,88],[247,76],[256,58],[268,54],[285,56],[300,46],[315,38],[340,23],[370,14],[400,10]]],
    ['#e7b88c', .6, [[228,38],[250,50],[260,34],[290,40],[340,18],[390,8]]],
    ['#eebf97', 1, [[395,8],[403,13],[412,25],[425,35],[440,48],[455,54],[470,57],[485,52],[500,43],[520,32],[540,18],[555,11],[600,8],[650,5]]]
  ];
  let o = '';
  for (const [c, op, pr] of layers) for (let X = 218, i = 0; X < 900; X += 4.644, i++) {
    const h = at(pr, X + 2) / 3; if (h <= 0) continue;
    const px = (X / 3).toFixed(2);
    o += `<rect x="${px}" y="${(808 - h).toFixed(1)}" width="1.55" height="${h.toFixed(1)}" fill="${c}" opacity="${op}"/>`;
    if (i % 2) o += `<rect x="${px}" y="${(808 - h).toFixed(1)}" width=".8" height="${h.toFixed(1)}" fill="${c === '#eebf97' ? '#f2a061' : c}" opacity=".8"/>`;
  }
  for (let X = 73; X < 1610; X += 1.55) {
    const d = X < 230 ? 1 : X < 380 ? .85 : X < 520 ? .3 : .04;
    if (rnd() < d) o += `<rect x="${X.toFixed(1)}" y="${X < 230 ? 806.5 : 807}" width="1.4" height="${X < 230 ? 1.5 : 1}" fill="${cols[Math.floor(rnd() * 10)]}" opacity="${X < 380 ? .6 : .35}"/>`;
  }
  return o;
}
define('trip-histogram', () => `<style>
:host{display:flex;font-family:"DejaVu Sans",Verdana,sans-serif}
svg{display:block;flex:none}
text{font-size:9.600px;fill:#2a3f5f}
</style>
<svg width="1645" height="281" viewBox="0 550 1645 281">
<rect x="73" y="550" width="1540" height="258" fill="#e5ecf6"/>
<path d="M73 570.500H1613M73 604.500H1613M73 638.500H1613M73 672.500H1613M73 706.500H1613M73 740.500H1613M73 774.500H1613" stroke="#fff"/>
${bars()}
<rect x="226" y="562.700" width="1" height="245" fill="#f7a5fb"/><rect x="225.600" y="795" width="1.600" height="12" fill="#ef6b8b"/><rect x="225.600" y="804" width="1.600" height="4" fill="#d8a850"/>
<path d="M73 808.500H1613" stroke="#d9b5c0" stroke-opacity=".4"/><path d="M73 808.500H380" stroke="#c99a9c"/>
${[14, 12, 10, 8, 6, 4, 2, 0].map((v, i) => `<text x="72" y="${574 + i * 34}" text-anchor="end">${v ? v + 'k' : 0}</text>`).join('')}
${[50, 100, 150, 200, 250, 300, 350, 400, 450, 500].map((v, i) => `<text x="${219.900 + i * 154.800}" y="818.500" text-anchor="middle">${v}</text>`).join('')}
<text transform="translate(32.500 679) rotate(-90)" text-anchor="middle" textLength="33" style="font-size:11.600px">count</text>
</svg><zone-legend></zone-legend>`);

define('taxi-dashboard', `<style>
:host{display:block;padding-left:6px;height:831px;box-sizing:border-box;overflow:hidden}
h1{margin:0;height:49px;font-size:26.600px;line-height:31px;font-weight:700}
.row,::slotted(div){display:flex}
.row{height:31px}
.sel{height:46px;padding-top:5px}
hr{margin:6px 3px 8px 0;border:1px solid;border-color:#999 #eee #eee #999;height:0}
hr.b{margin:8px 3px 0 0}
.chart{margin:57px 0 0 -6px}
</style><h1><slot name="title"></slot></h1><slot></slot><div class="sel"><slot name="top"></slot></div><hr><div class="row"><slot name="filter"></slot><slot name="value"></slot></div><hr class="b"><div class="chart"><slot name="chart"></slot></div>`);
</script>
</body>
</html>
